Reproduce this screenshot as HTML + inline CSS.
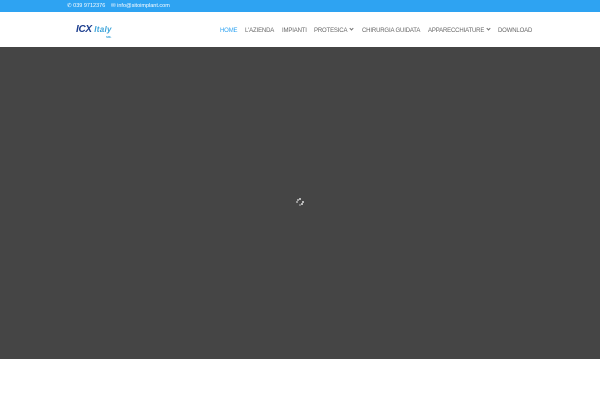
<!DOCTYPE html>
<html><head><meta charset="utf-8"><style>
*{margin:0;padding:0;box-sizing:border-box}
body{width:600px;height:400px;background:#fff;font-family:"Liberation Sans",sans-serif;position:relative;overflow:hidden}
.top{position:absolute;left:0;top:0;width:600px;height:12px;background:#2ea3f2;color:#fff;font-size:5.5px;line-height:12px}
.top span{position:absolute;top:0}
.hdr{position:absolute;left:0;top:12px;width:600px;height:35px;background:#fff}
.logo{position:absolute;left:76px;top:12px;font-style:italic;font-weight:bold;font-size:10px;color:#1d3f8f;letter-spacing:-0.3px}
.logo i{font-weight:bold;color:#3aa3d9;font-size:8px;letter-spacing:0.3px}
.logo small{position:absolute;left:30px;top:11px;font-size:3px;color:#3aa3d9;font-style:normal}
.nav{position:absolute;left:0;top:14px;font-size:6px;color:#666;white-space:nowrap;letter-spacing:-0.15px}
.nav span{position:absolute}
.ch{display:inline-block;width:3px;height:3px;border-right:0.7px solid #777;border-bottom:0.7px solid #777;transform:rotate(45deg);margin-left:3px;position:relative;top:-1.5px}
.dark{position:absolute;left:0;top:47px;width:600px;height:312px;background:#454545}
.spin{position:absolute;left:296px;top:198px;width:8px;height:8px}
.spin b{position:absolute;width:2px;height:2px;background:#ddd;border-radius:1px}
</style></head><body>
<div class="top"><span style="left:67px">&#9990; 039 9712376</span><span style="left:111px">&#9993; info@sitoimplant.com</span></div>
<div class="hdr">
<div class="logo">ICX <i>Italy</i><small>SRL</small></div>
<div class="nav" style="top:15.5px">
<span style="left:220px;color:#2ea3f2">HOME</span>
<span style="left:245px">L'AZIENDA</span>
<span style="left:282px">IMPIANTI</span>
<span style="left:314px">PROTESICA<i class="ch"></i></span>
<span style="left:362px">CHIRURGIA GUIDATA</span>
<span style="left:428px">APPARECCHIATURE<i class="ch"></i></span>
<span style="left:498px">DOWNLOAD</span>
</div></div>
<div class="dark"></div>
<div class="spin"><b style="left:3px;top:0"></b><b style="left:0;top:3px;opacity:.7"></b><b style="left:6px;top:3px"></b><b style="left:3px;top:6px;opacity:.5"></b><b style="left:1px;top:1px;opacity:.8"></b><b style="left:5px;top:5px"></b></div>
</body></html>
